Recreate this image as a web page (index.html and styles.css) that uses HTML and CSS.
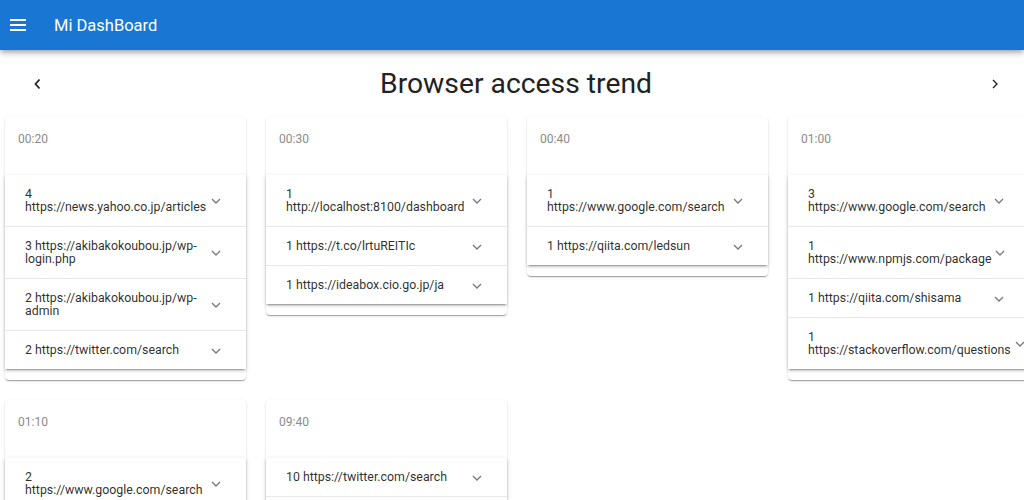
FILE: index.html
```html
<!DOCTYPE html>
<html lang="en">
<head>
<meta charset="utf-8">
<title>Mi DashBoard</title>
<link rel="stylesheet" href="styles.css">
</head>
<body>
<header class="toolbar">
  <button class="menu-btn" aria-label="menu">
    <svg width="16" height="12" viewBox="0 0 16 12"><path d="M0 1h16M0 6h16M0 11h16" stroke="#fff" stroke-width="2"/></svg>
  </button>
  <span class="app-title">Mi DashBoard</span>
</header>
<main class="content">
  <div class="page-head">
    <button class="nav-btn" aria-label="previous">
      <svg width="8" height="12" viewBox="0 0 8 12"><path d="M6.5 1.5L2.5 6l4 4.5" fill="none" stroke="#222" stroke-width="1.8"/></svg>
    </button>
    <h1 class="page-title">Browser access trend</h1>
    <button class="nav-btn" aria-label="next">
      <svg width="8" height="12" viewBox="0 0 8 12"><path d="M2 2l4 4-4 4" fill="none" stroke="#222" stroke-width="1.4"/></svg>
    </button>
  </div>

  <div class="grid">
    <section class="card">
      <div class="card-time">00:20</div>
      <div class="accordion">
        <div class="panel"><span class="panel-title">4 https://news.yahoo.co.jp/articles</span><svg class="chev" width="10" height="6" viewBox="0 0 10 6"><path d="M1 1l4 4 4-4" fill="none" stroke="#777" stroke-width="1.3"/></svg></div>
        <div class="panel"><span class="panel-title">3 https://akibakokoubou.jp/wp-login.php</span><svg class="chev" width="10" height="6" viewBox="0 0 10 6"><path d="M1 1l4 4 4-4" fill="none" stroke="#777" stroke-width="1.3"/></svg></div>
        <div class="panel"><span class="panel-title">2 https://akibakokoubou.jp/wp-admin</span><svg class="chev" width="10" height="6" viewBox="0 0 10 6"><path d="M1 1l4 4 4-4" fill="none" stroke="#777" stroke-width="1.3"/></svg></div>
        <div class="panel"><span class="panel-title">2 https://twitter.com/search</span><svg class="chev" width="10" height="6" viewBox="0 0 10 6"><path d="M1 1l4 4 4-4" fill="none" stroke="#777" stroke-width="1.3"/></svg></div>
      </div>
    </section>

    <section class="card">
      <div class="card-time">00:30</div>
      <div class="accordion">
        <div class="panel"><span class="panel-title">1 http://localhost:8100/dashboard</span><svg class="chev" width="10" height="6" viewBox="0 0 10 6"><path d="M1 1l4 4 4-4" fill="none" stroke="#777" stroke-width="1.3"/></svg></div>
        <div class="panel"><span class="panel-title">1 https://t.co/lrtuREITIc</span><svg class="chev" width="10" height="6" viewBox="0 0 10 6"><path d="M1 1l4 4 4-4" fill="none" stroke="#777" stroke-width="1.3"/></svg></div>
        <div class="panel"><span class="panel-title">1 https://ideabox.cio.go.jp/ja</span><svg class="chev" width="10" height="6" viewBox="0 0 10 6"><path d="M1 1l4 4 4-4" fill="none" stroke="#777" stroke-width="1.3"/></svg></div>
      </div>
    </section>

    <section class="card">
      <div class="card-time">00:40</div>
      <div class="accordion">
        <div class="panel"><span class="panel-title">1 https://www.google.com/search</span><svg class="chev" width="10" height="6" viewBox="0 0 10 6"><path d="M1 1l4 4 4-4" fill="none" stroke="#777" stroke-width="1.3"/></svg></div>
        <div class="panel"><span class="panel-title">1 https://qiita.com/ledsun</span><svg class="chev" width="10" height="6" viewBox="0 0 10 6"><path d="M1 1l4 4 4-4" fill="none" stroke="#777" stroke-width="1.3"/></svg></div>
      </div>
    </section>

    <section class="card">
      <div class="card-time">01:00</div>
      <div class="accordion">
        <div class="panel"><span class="panel-title">3 https://www.google.com/search</span><svg class="chev" width="10" height="6" viewBox="0 0 10 6"><path d="M1 1l4 4 4-4" fill="none" stroke="#777" stroke-width="1.3"/></svg></div>
        <div class="panel"><span class="panel-title">1 https://www.npmjs.com/package</span><svg class="chev" width="10" height="6" viewBox="0 0 10 6"><path d="M1 1l4 4 4-4" fill="none" stroke="#777" stroke-width="1.3"/></svg></div>
        <div class="panel"><span class="panel-title">1 https://qiita.com/shisama</span><svg class="chev" width="10" height="6" viewBox="0 0 10 6"><path d="M1 1l4 4 4-4" fill="none" stroke="#777" stroke-width="1.3"/></svg></div>
        <div class="panel"><span class="panel-title">1 https://stackoverflow.com/questions</span><svg class="chev" width="10" height="6" viewBox="0 0 10 6"><path d="M1 1l4 4 4-4" fill="none" stroke="#777" stroke-width="1.3"/></svg></div>
      </div>
    </section>

    <section class="card">
      <div class="card-time">01:10</div>
      <div class="accordion">
        <div class="panel"><span class="panel-title">2 https://www.google.com/search</span><svg class="chev" width="10" height="6" viewBox="0 0 10 6"><path d="M1 1l4 4 4-4" fill="none" stroke="#777" stroke-width="1.3"/></svg></div>
        <div class="panel"><span class="panel-title">1 https://www.google.com/search</span><svg class="chev" width="10" height="6" viewBox="0 0 10 6"><path d="M1 1l4 4 4-4" fill="none" stroke="#777" stroke-width="1.3"/></svg></div>
      </div>
    </section>

    <section class="card">
      <div class="card-time">09:40</div>
      <div class="accordion">
        <div class="panel"><span class="panel-title">10 https://twitter.com/search</span><svg class="chev" width="10" height="6" viewBox="0 0 10 6"><path d="M1 1l4 4 4-4" fill="none" stroke="#777" stroke-width="1.3"/></svg></div>
        <div class="panel"><span class="panel-title">2 https://www.google.com/search</span><svg class="chev" width="10" height="6" viewBox="0 0 10 6"><path d="M1 1l4 4 4-4" fill="none" stroke="#777" stroke-width="1.3"/></svg></div>
      </div>
    </section>
  </div>
</main>
</body>
</html>
```

FILE: styles.css
```css
html, body {
  margin: 0;
  padding: 0;
  overflow: hidden;
  background: #fff;
  font-family: Roboto, "Liberation Sans", sans-serif;
  color: rgba(0, 0, 0, 0.87);
}

.toolbar {
  position: relative;
  z-index: 2;
  height: 50px;
  background: #1976d2;
  color: #fff;
  display: flex;
  align-items: center;
  box-shadow: 0 2px 4px -1px rgba(0,0,0,.2), 0 4px 5px 0 rgba(0,0,0,.14), 0 1px 10px 0 rgba(0,0,0,.12);
}

.menu-btn {
  width: 36px;
  height: 36px;
  padding: 0 0 0 10px;
  border: 0;
  background: transparent;
  display: flex;
  align-items: center;
  justify-content: flex-start;
}
.menu-btn svg { display: block; }

.app-title {
  margin-left: 18px;
  font-size: 16.5px;
  font-weight: 400;
}

.page-head {
  height: 67px;
  display: flex;
  align-items: center;
  justify-content: space-between;
  padding: 0 9px 0 17px;
}

.nav-btn {
  width: 40px;
  height: 40px;
  border: 0;
  padding: 0;
  background: transparent;
  display: flex;
  align-items: center;
  justify-content: center;
}
.nav-btn svg { display: block; }

.page-title {
  margin: 0;
  font-size: 28.3px;
  font-weight: 400;
  color: #222;
}

.grid {
  display: grid;
  grid-template-columns: repeat(4, 241px);
  column-gap: 20px;
  row-gap: 20px;
  padding-left: 5px;
  align-items: start;
}

.card {
  background: #fff;
  border-radius: 4px;
  padding-bottom: 11px;
  box-shadow: 0 2px 1px -1px rgba(0,0,0,.2), 0 1px 1px 0 rgba(0,0,0,.14), 0 1px 3px 0 rgba(0,0,0,.12);
}

.card-time {
  height: 58px;
  box-sizing: border-box;
  padding: 15px 0 0 13px;
  font-size: 12px;
  line-height: 14px;
  color: #8a8a8a;
}

.accordion {
  box-shadow: 0 3px 1px -2px rgba(0,0,0,.2), 0 2px 2px 0 rgba(0,0,0,.14), 0 1px 5px 0 rgba(0,0,0,.12);
}

.panel {
  display: flex;
  align-items: center;
  padding: 13px 25px 12px 20px;
  border-top: 1px solid rgba(0, 0, 0, 0.09);
  font-size: 12.35px;
  line-height: 13px;
  color: rgba(0, 0, 0, 0.84);
}
.panel:first-child { border-top: 0; }

.panel-title {
  flex: 1 1 auto;
  margin-right: 4px;
}

.chev {
  flex: 0 0 auto;
  display: block;
}
```
